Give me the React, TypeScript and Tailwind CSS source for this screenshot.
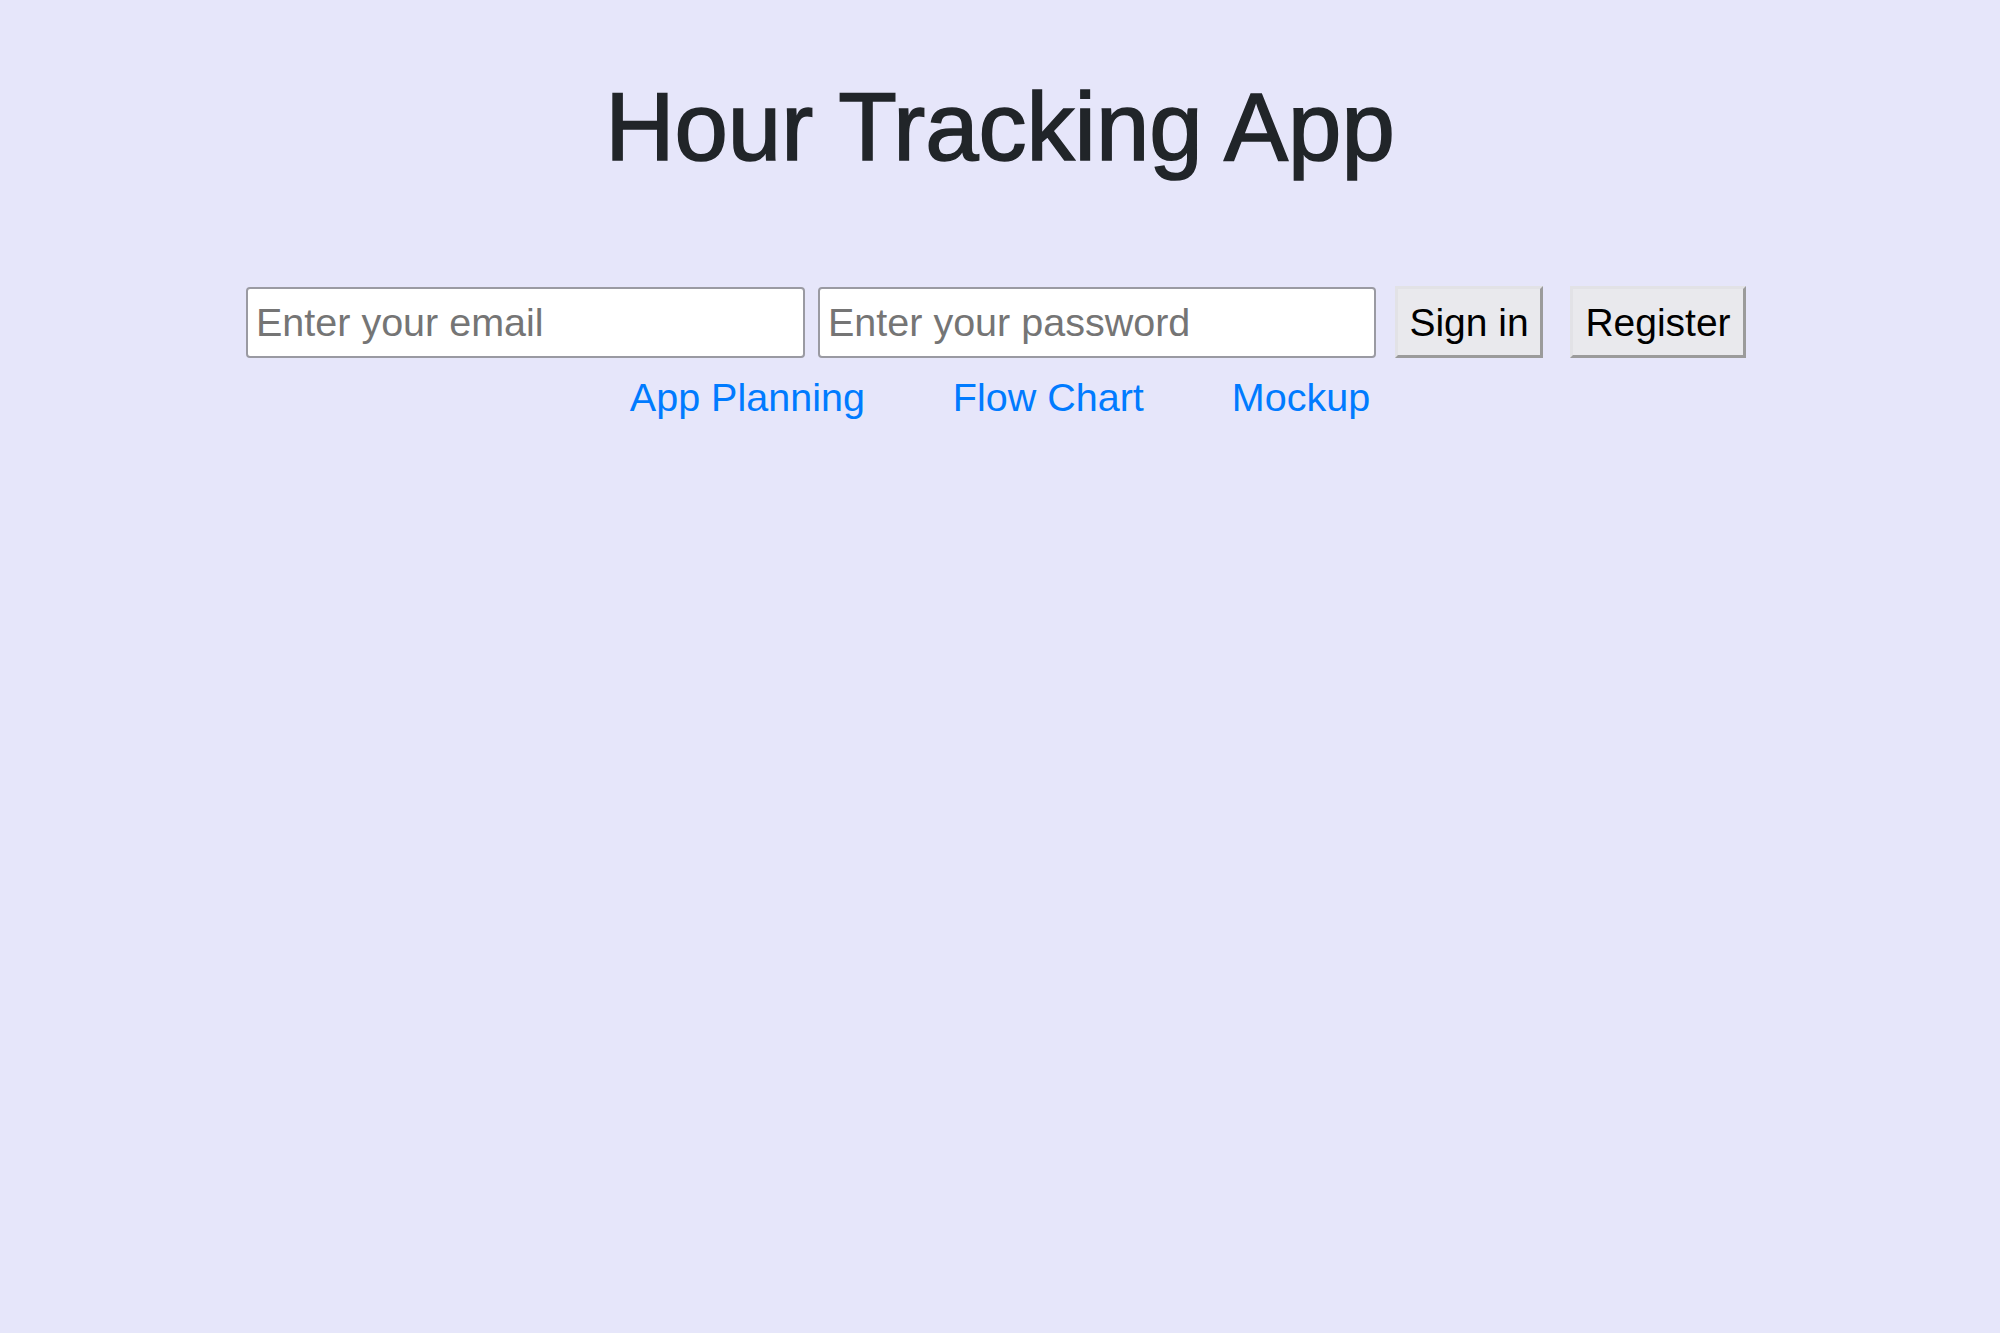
import React from 'react';

const links = ['App Planning', 'Flow Chart', 'Mockup'];

export default function App() {
  return (
    <div className="min-h-screen bg-[#e6e6fa] font-['Liberation_Sans',Arial,sans-serif] text-[#212529] flex flex-col items-center">
      <h1 className="mt-[69px] text-[96px] leading-[1.2] font-normal text-[#212529] [-webkit-text-stroke:1.6px_#212529]">
        Hour Tracking App
      </h1>

      <div className="mt-[102px] flex items-center pr-[8px]">
        <input
          type="email"
          placeholder="Enter your email"
          className="w-[559px] h-[71px] bg-white border-[2px] border-[#9a9aa2] rounded-[4px] px-[8px] text-[39.5px] text-black placeholder:text-[#757575] outline-none"
        />
        <input
          type="password"
          placeholder="Enter your password"
          className="ml-[13px] w-[558px] h-[71px] bg-white border-[2px] border-[#9a9aa2] rounded-[4px] px-[8px] text-[39.5px] text-black placeholder:text-[#757575] outline-none"
        />
        <button className="ml-[19px] w-[148px] h-[72px] bg-[#e9e9ed] border-[3px] border-t-[#e2e2e6] border-l-[#e2e2e6] border-r-[#9b9b9b] border-b-[#9b9b9b] text-[39px] text-black leading-none">
          Sign in
        </button>
        <button className="ml-[27px] w-[176px] h-[72px] bg-[#e9e9ed] border-[3px] border-t-[#e2e2e6] border-l-[#e2e2e6] border-r-[#9b9b9b] border-b-[#9b9b9b] text-[39px] text-black leading-none">
          Register
        </button>
      </div>

      <div className="mt-[10px] flex items-center gap-[88px]">
        {links.map((l) => (
          <a key={l} href="#" className="text-[39.5px] leading-[1.5] text-[#007bff]">
            {l}
          </a>
        ))}
      </div>
    </div>
  );
}
